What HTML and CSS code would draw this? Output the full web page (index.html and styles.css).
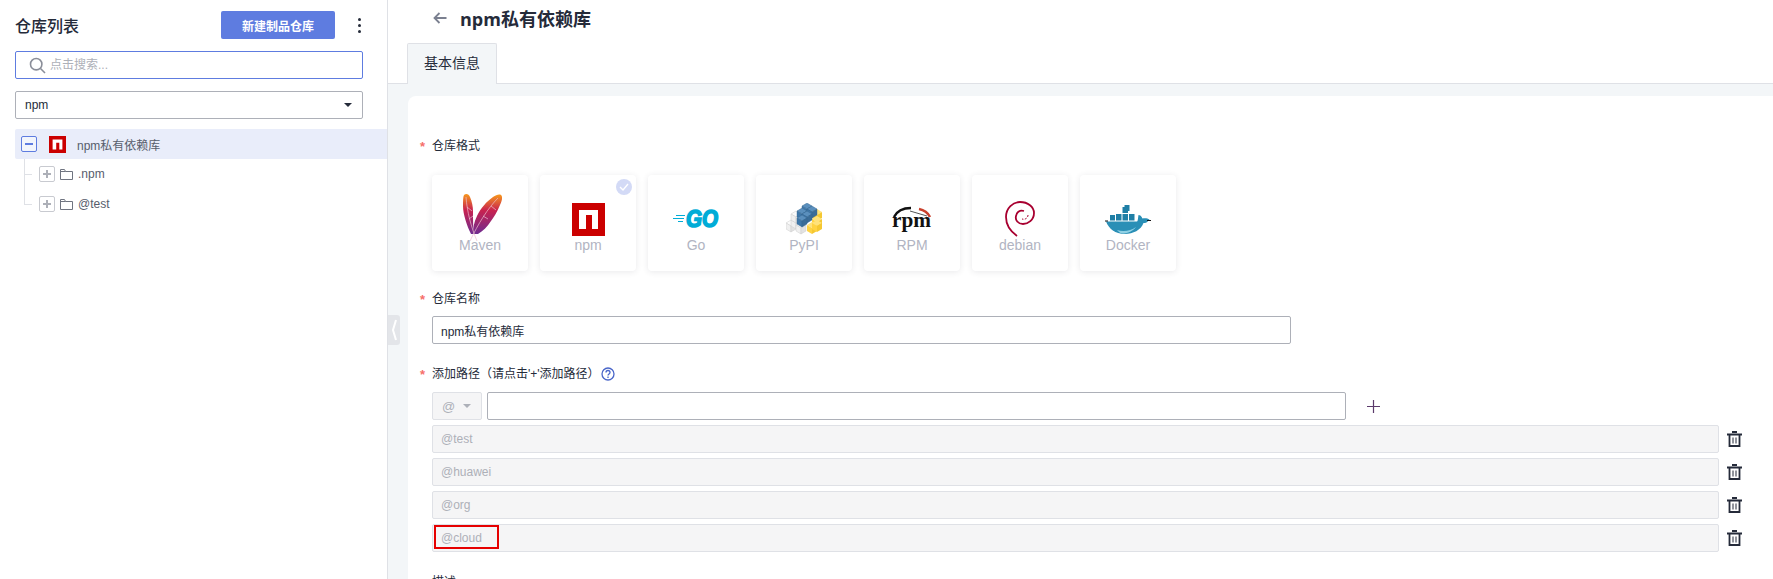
FILE: index.html
```html
<!DOCTYPE html>
<html lang="zh-CN">
<head>
    <meta charset="UTF-8" />
    <title>npm私有依赖库</title>
    <link rel="stylesheet" href="styles.css">
</head>
<body>
    <aside class="sidebar">
        <div class="side-head">
            <h2>仓库列表</h2>
            <button class="btn-new">新建制品仓库</button>
            <span class="more"><i></i><i></i><i></i></span>
        </div>
        <div class="search">
            <svg width="17" height="17" viewBox="0 0 17 17" fill="none" stroke="#8a8e99" stroke-width="1.6"><circle cx="7.2" cy="7.2" r="5.7"/><path d="M11.5 11.5l4.5 4.5"/></svg>
            <input type="text" placeholder="点击搜索..." />
        </div>
        <div class="select"><span>npm</span><b class="caret"></b></div>
        <div class="tree-root">
            <span class="toggle toggle-on"></span>
            <svg class="npm-small" width="17" height="17" viewBox="0 0 33 33"><path fill="#cb0000" d="M0 0h33v33H0z"/><path fill="#fff" d="M7 7h19v19h-6V13h-6v13H7z"/></svg>
            <span>npm私有依赖库</span>
        </div>
        <div class="tree-children">
            <div class="tree-row">
                <span class="toggle"></span>
                <svg width="13" height="11" viewBox="0 0 13 11" fill="none" stroke="#6f7480"><path d="M.5 10.500V.5h4l1 2h7v8zM.5 2.500h5"/></svg>
                <span>.npm</span>
            </div>
            <div class="tree-row">
                <span class="toggle"></span>
                <svg width="13" height="11" viewBox="0 0 13 11" fill="none" stroke="#6f7480"><path d="M.5 10.500V.5h4l1 2h7v8zM.5 2.500h5"/></svg>
                <span>@test</span>
            </div>
        </div>
    </aside>

    <main class="main">
        <span class="collapse"><svg width="6" height="22" viewBox="0 0 6 22" fill="none" stroke="#fff" stroke-width="2"><path d="M5 1L2 11l3 10"/></svg></span>
        <header class="page-head">
            <svg width="14" height="12" viewBox="0 0 14 12" fill="none" stroke="#7b8090" stroke-width="1.8"><path d="M6.500 1L1.500 6l5 5M1.500 6H13.500"/></svg>
            <h1>npm私有依赖库</h1>
        </header>
        <div class="tabs"><div class="tab">基本信息</div></div>
        <div class="content">
            <form class="panel">
                <div class="label req">仓库格式</div>
                <div class="formats">
                    <div class="format">
                        <div class="logo logo-up">
                            <svg width="44" height="50" viewBox="0 0 44 50">
                                <defs><linearGradient id="feather" x1="0" y1="0" x2="0" y2="1"><stop offset="0" stop-color="#f7981d"/><stop offset=".4" stop-color="#c8224f"/><stop offset="1" stop-color="#6f2c91"/></linearGradient></defs>
                                <path fill="url(#feather)" d="M4 3C6 1 9 2 10 5c2 5 3 9 3 15 0 8 0 15 1 22h-3C7 34 3 22 3 14 3 9 3 5 4 3z"/>
                                <path fill="url(#feather)" d="M41 3c2 2 1 6-1 10-3 7-6 12-9 16-4 6-8 10-13 13h-5c0-6 1-12 4-18 4-8 9-14 16-19 3-2 6-3 8-2z"/>
                                <path fill="none" stroke="#eebfce" stroke-width=".7" d="M6 5c1 14 5 30 11 44M38 6C28 16 18 32 10 49M7 15l5 4M9 27l4-3M31 14l5 4M23 24l5 3"/>
                            </svg>
                        </div>
                        <span>Maven</span>
                    </div>
                    <div class="format">
                        <span class="checked"><svg width="10" height="8" viewBox="0 0 10 8" fill="none" stroke="#fff" stroke-width="1.4"><path d="M1 4l3 3 5-6"/></svg></span>
                        <div class="logo">
                            <svg width="33" height="33" viewBox="0 0 33 33"><path fill="#cb0000" d="M0 0h33v33H0z"/><path fill="#fff" d="M7 7h19v19h-6V12h-6v14H7z"/></svg>
                        </div>
                        <span>npm</span>
                    </div>
                    <div class="format">
                        <div class="logo logo-go">
                            <svg width="50" height="28" viewBox="0 -4 50 28">
                                <path stroke="#00acd7" stroke-width="1.200" d="M3 6.500h9M0 9.500h11M5 12.500h5"/>
                                <text class="go-text" x="13" y="18" textLength="32" lengthAdjust="spacingAndGlyphs">GO</text>
                            </svg>
                        </div>
                        <span>Go</span>
                    </div>
                    <div class="format">
                        <div class="logo">
                            <svg width="37" height="32" viewBox="0 0 37 32">
                                <defs>
                                    <g id="cube-w"><path fill="#fafafa" stroke="#cfcfcf" stroke-width=".5" d="M0 3l5-3 5 3-5 3z"/><path fill="#f0f0f0" stroke="#cfcfcf" stroke-width=".5" d="M0 3l5 3v6l-5-3z"/><path fill="#e2e2e2" stroke="#cfcfcf" stroke-width=".5" d="M10 3L5 6v6l5-3z"/></g>
                                    <g id="cube-b"><path fill="#5a8fbd" stroke="#34648f" stroke-width=".4" d="M0 3l5-3 5 3-5 3z"/><path fill="#3f77a8" stroke="#34648f" stroke-width=".4" d="M0 3l5 3v6l-5-3z"/><path fill="#3a6c98" stroke="#34648f" stroke-width=".4" d="M10 3L5 6v6l5-3z"/></g>
                                    <g id="cube-y"><path fill="#ffe27a" d="M0 3l5-3 5 3-5 3z"/><path fill="#ffd343" d="M0 3l5 3v6l-5-3z"/><path fill="#f5c832" d="M10 3L5 6v6l5-3z"/></g>
                                </defs>
                                <use href="#cube-w" x="0" y="17"/><use href="#cube-w" x="5" y="14"/><use href="#cube-w" x="10" y="19"/>
                                <use href="#cube-w" x="5" y="8"/>
                                <use href="#cube-y" x="26" y="6"/><use href="#cube-y" x="26" y="13"/><use href="#cube-y" x="21" y="19"/><use href="#cube-y" x="26" y="17"/>
                                <use href="#cube-b" x="16" y="0"/><use href="#cube-b" x="21" y="3"/>
                                <use href="#cube-b" x="11" y="5"/><use href="#cube-b" x="16" y="8"/><use href="#cube-b" x="11" y="12"/>
                            </svg>
                        </div>
                        <span>PyPI</span>
                    </div>
                    <div class="format">
                        <div class="logo">
                            <svg width="40" height="27" viewBox="0 0 40 27">
                                <path fill="none" stroke="#111" stroke-width="2.500" d="M2 11C5 5 11 2 19 2"/>
                                <path fill="none" stroke="#c9402c" stroke-width="2.500" d="M27 3c5 1 9 4 11 8"/>
                                <path stroke="#555" d="M18 5l17 5"/>
                                <text class="rpm-text" x="0" y="21" textLength="39" lengthAdjust="spacingAndGlyphs">rpm</text>
                            </svg>
                        </div>
                        <span>RPM</span>
                    </div>
                    <div class="format">
                        <div class="logo">
                            <svg width="30" height="36" viewBox="0 0 30 36" fill="none" stroke="#a80030">
                                <path stroke-width="1.800" d="M12 35C5 30 1 24 1 16 1 7 8 1 15 1c8 0 14 5 14 11 0 7-6 11-11 11-5 0-8-4-7-8 1-4 4-6 8-5"/>
                                <path stroke-width="1" stroke-dasharray="2 1.500" d="M23 14c0 3-3 5-6 4"/>
                            </svg>
                        </div>
                        <span>debian</span>
                    </div>
                    <div class="format">
                        <div class="logo">
                            <svg width="46" height="29" viewBox="0 0 46 29">
                                <path fill="#2a8fb6" d="M1 16.500h31c1-.5 1-4 1.500-6.500 1.500 0 3 1 4 3.500 2-.5 5-.5 7 1-2 3-4 3.500-6 3.500C36 25 28 29 20 29 10 29 4 24 1 16.500z"/>
                                <path fill="#8fd0e4" d="M12 25c6 2 14 1 19-3-3 4-8 6.500-13 6.500-2 0-4-1-6-3.500z"/>
                                <path fill="#1f7fa6" d="M11 9h5.500v6.500H11zM17.500 9H23v6.500h-5.500zM24 9h5.500v6.500H24zM17.500 2H23v6h-5.500zM19.500 0h5v6h-5zM5 10h5v5.500H5z"/>
                                <path fill="#111" d="M0 15.500h3v1H0zM42 15h4v1h-4z"/>
                            </svg>
                        </div>
                        <span>Docker</span>
                    </div>
                </div>

                <div class="label req label-name">仓库名称</div>
                <input class="field field-name" type="text" value="npm私有依赖库" />

                <div class="label req label-path">
                    添加路径（请点击'+'添加路径）
                    <svg width="14" height="14" viewBox="0 0 14 14" fill="none" stroke="#4a66c9" stroke-width="1.300"><circle cx="7" cy="7" r="6"/><path d="M5 5.500C5 4 6 3.500 7 3.500s2 .7 2 1.900C9 7 7 6.900 7 8.600M7 9.600v1.300"/></svg>
                </div>
                <div class="add-row">
                    <div class="at-select"><span>@</span><b class="caret caret-off"></b></div>
                    <input class="field field-add" type="text" />
                    <svg class="plus" width="13" height="13" viewBox="0 0 13 13" stroke="#5b3a6b" stroke-width="1.200"><path d="M6.500 0v13M0 6.500h13"/></svg>
                </div>

                <div class="path-list">
                    <div class="path-row">
                        <input class="field" type="text" value="@test" disabled />
                        <svg class="trash"><use href="#trash"/></svg>
                    </div>
                    <div class="path-row">
                        <input class="field" type="text" value="@huawei" disabled />
                        <svg class="trash"><use href="#trash"/></svg>
                    </div>
                    <div class="path-row">
                        <input class="field" type="text" value="@org" disabled />
                        <svg class="trash"><use href="#trash"/></svg>
                    </div>
                    <div class="path-row">
                        <input class="field" type="text" value="@cloud" disabled />
                        <span class="highlight"></span>
                        <svg class="trash"><use href="#trash"/></svg>
                    </div>
                </div>

                <div class="label label-desc">描述</div>
            </form>
        </div>
    </main>

    <svg class="defs" width="0" height="0">
        <symbol id="trash" viewBox="0 0 15 16">
            <path fill="none" stroke="#252b3a" stroke-width="1.800" d="M0 3.500h15M5 1h5M2.500 3.500v11.500h10V3.500"/>
            <path fill="none" stroke="#252b3a" d="M6 6.500v6M9 6.500v6"/>
        </symbol>
    </svg>
</body>
</html>
```

FILE: styles.css
```css
* {
    box-sizing: border-box;
}
html,
body {
    height: 579px;
    margin: 0;
    overflow: hidden;
}
body {
    display: flex;
    font-family: "Liberation Sans", "Noto Sans CJK SC", sans-serif;
    font-size: 12px;
    color: #252b3a;
    background: #fff;
}
input {
    font: inherit;
    color: inherit;
    outline: none;
}
.defs {
    position: absolute;
}

/* left column */
.sidebar {
    width: 388px;
    flex: none;
    border-right: 1px solid #dfe1e6;
    padding-top: 11px;
}
.side-head {
    display: flex;
    align-items: center;
    height: 28px;
    padding-left: 15px;
    margin-bottom: 12px;
}
.side-head h2 {
    width: 206px;
    margin: 0;
    font-size: 16px;
    font-weight: 500;
}
.btn-new {
    width: 114px;
    height: 28px;
    border: none;
    border-radius: 2px;
    background: #5e7ce0;
    color: #fff;
    font: inherit;
    font-weight: bold;
}
.more {
    display: flex;
    flex-direction: column;
    gap: 3px;
    margin-left: 23px;
}
.more i {
    width: 3px;
    height: 3px;
    border-radius: 50%;
    background: #252b3a;
}
.search {
    display: flex;
    align-items: center;
    gap: 4px;
    width: 348px;
    height: 28px;
    margin: 0 0 12px 15px;
    padding-left: 13px;
    border: 1px solid #5e7ce0;
    border-radius: 2px;
}
.search input {
    flex: 1;
    min-width: 0;
    border: none;
    padding: 0;
}
.search input::placeholder {
    color: #adb0b8;
}
.select {
    display: flex;
    align-items: center;
    justify-content: space-between;
    width: 348px;
    height: 28px;
    margin: 0 0 10px 15px;
    padding: 0 10px 0 9px;
    border: 1px solid #adb0b8;
    border-radius: 2px;
}
.caret {
    width: 0;
    height: 0;
    border: 4px solid transparent;
    border-top: 4px solid #252b3a;
    border-bottom: none;
}
.caret-off {
    border-top-color: #adb0b8;
}
.tree-root {
    display: flex;
    align-items: center;
    height: 30px;
    margin-left: 15px;
    padding-left: 6px;
    background: #e9edfa;
    border-radius: 2px 0 0 2px;
    color: #575d6c;
}
.tree-root .npm-small {
    margin: 0 11px 0 12px;
}
.toggle {
    position: relative;
    flex: none;
    width: 16px;
    height: 16px;
    border: 1px solid #c8cad0;
    border-radius: 2px;
    background: #fff;
}
.toggle::before,
.toggle::after {
    content: "";
    position: absolute;
    background: #adb0b8;
}
.toggle::before {
    left: 3px;
    right: 3px;
    top: 6px;
    height: 2px;
}
.toggle::after {
    top: 3px;
    bottom: 3px;
    left: 6px;
    width: 2px;
}
.toggle-on {
    border-color: #5e7ce0;
    background: #f2f5fc;
}
.toggle-on::before {
    background: #5e7ce0;
}
.toggle-on::after {
    display: none;
}
.tree-children {
    position: relative;
    padding-left: 39px;
    color: #575d6c;
}
.tree-children::before {
    content: "";
    position: absolute;
    left: 24px;
    top: 0;
    height: 45px;
    width: 1px;
    background: #dfe1e6;
}
.tree-row {
    position: relative;
    display: flex;
    align-items: center;
    gap: 5px;
    height: 30px;
}
.tree-row::before {
    content: "";
    position: absolute;
    left: -15px;
    top: 15px;
    width: 8px;
    height: 1px;
    background: #dfe1e6;
}

/* right column */
.main {
    position: relative;
    flex: 1;
    min-width: 0;
    display: flex;
    flex-direction: column;
}
.collapse {
    position: absolute;
    left: 0;
    top: 315px;
    display: flex;
    align-items: center;
    justify-content: center;
    width: 12px;
    height: 30px;
    background: #e3e5e9;
    border-radius: 0 3px 3px 0;
}
.page-head {
    display: flex;
    align-items: center;
    gap: 13px;
    height: 36px;
    padding-left: 45px;
}
.page-head h1 {
    margin: 0;
    font-family: "Open Sans", "Noto Sans CJK SC", sans-serif;
    font-size: 18px;
    font-weight: 700;
}
.tabs {
    height: 48px;
    padding: 7px 0 0 19px;
    border-bottom: 1px solid #dfe1e6;
}
.tab {
    width: 90px;
    height: 41px;
    border: 1px solid #dfe1e6;
    border-bottom: none;
    border-radius: 2px 2px 0 0;
    background: #f3f6f8;
    text-align: center;
    line-height: 39px;
    font-size: 14px;
}
.content {
    flex: 1;
    min-height: 0;
    padding: 12px 0 0 20px;
    background: #f3f6f8;
}
.panel {
    height: 100%;
    padding: 42px 34px 0 24px;
    background: #fff;
    border-radius: 8px 0 0 0;
    overflow: hidden;
}
.label {
    position: relative;
    display: flex;
    align-items: center;
    gap: 1px;
    height: 16px;
    line-height: 16px;
}
.req::before {
    content: "*";
    position: absolute;
    left: -12px;
    top: 1px;
    color: #f66f6a;
    font-size: 13px;
    font-weight: bold;
}
.formats {
    display: flex;
    gap: 12px;
    margin-top: 21px;
}
.format {
    position: relative;
    width: 96px;
    height: 96px;
    padding-top: 20px;
    border-radius: 4px;
    background: #fff;
    box-shadow: 0 1px 6px rgba(37, 43, 58, 0.1);
    text-align: center;
    font-size: 14px;
    line-height: 16px;
    color: #b1b4c2;
}
.logo {
    display: flex;
    align-items: center;
    justify-content: center;
    height: 48px;
    margin-bottom: -6px;
}
.logo-up svg {
    margin: -4px 0 0 4px;
}
.logo-go svg {
    margin-left: 4px;
}
.checked {
    position: absolute;
    top: 4px;
    right: 4px;
    display: flex;
    align-items: center;
    justify-content: center;
    width: 16px;
    height: 16px;
    border-radius: 50%;
    background: #d3daf6;
}
.go-text {
    font-family: "Liberation Sans", sans-serif;
    font-size: 23px;
    font-weight: bold;
    font-style: italic;
    fill: #00acd7;
    stroke: #00acd7;
    stroke-width: 1.600;
}
.rpm-text {
    font-family: "Liberation Serif", serif;
    font-size: 20px;
    font-weight: bold;
    fill: #111;
}
.label-name {
    margin-top: 20px;
}
.field {
    display: block;
    width: 100%;
    height: 28px;
    padding: 0 8px;
    border: 1px solid #adb0b8;
    border-radius: 2px;
}
.field-name {
    width: 859px;
    margin-top: 9px;
}
.label-path {
    margin-top: 22px;
}
.add-row {
    display: flex;
    align-items: center;
    margin-top: 10px;
}
.at-select {
    display: flex;
    align-items: center;
    gap: 8px;
    width: 50px;
    height: 28px;
    padding-left: 9px;
    border: 1px solid #dfe1e6;
    border-radius: 2px;
    background: #f5f5f6;
    color: #adb0b8;
    font-size: 13px;
}
.field-add {
    width: 859px;
    margin-left: 5px;
}
.plus {
    margin-left: 21px;
}
.path-list {
    display: flex;
    flex-direction: column;
    gap: 5px;
    margin-top: 5px;
}
.path-row {
    position: relative;
    display: flex;
    align-items: center;
    gap: 8px;
}
.path-row .field {
    width: 1287px;
    flex: none;
    background: #f5f5f6;
    border-color: #dfe1e6;
    color: #adb0b8;
}
.highlight {
    position: absolute;
    left: 2px;
    top: 1px;
    width: 65px;
    height: 24px;
    border: 2px solid #e60000;
}
.trash {
    flex: none;
    width: 15px;
    height: 16px;
}
.label-desc {
    margin-top: 22px;
}
```
